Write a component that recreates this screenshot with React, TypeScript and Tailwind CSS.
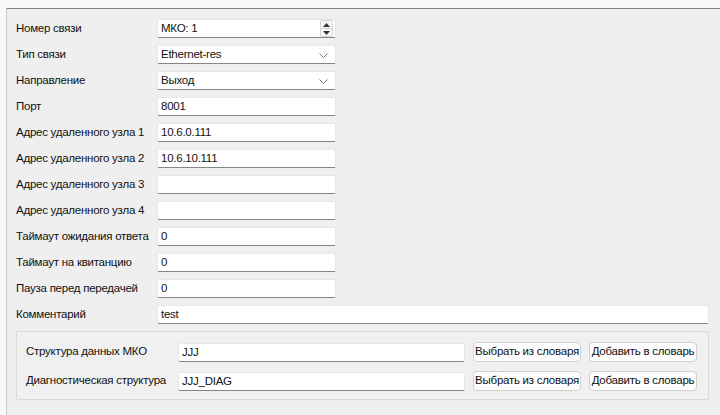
import React from "react";

const font = { fontFamily: '"Liberation Sans", Arial, sans-serif' };

const Chevron = () => (
  <svg width="9" height="5" viewBox="0 0 9 5" className="absolute right-[7px] top-[7px]">
    <path d="M0.5 0.5 L4.5 4.5 L8.5 0.5" fill="none" stroke="#7a7a7a" strokeWidth="1" />
  </svg>
);

const Field = ({ value, combo, spin, wide }: { value?: string; combo?: boolean; spin?: boolean; wide?: boolean }) => (
  <div
    className={`relative h-[19px] bg-white border border-[#e6e6e6] border-b-[#858585] rounded-[2px] pl-[3px] text-[11.5px] tracking-[-0.25px] leading-[17px] text-[#111] whitespace-nowrap ${
      wide ? "flex-1" : "w-[179px]"
    }`}
  >
    {value}
    {combo && <Chevron />}
    {spin && (
      <div className="absolute right-[2px] top-[0px] w-[13px] h-[17px] border border-[#d6d6d6] rounded-[2px] bg-[#f7f7f7] flex flex-col">
        <div className="flex-1 flex items-center justify-center border-b border-[#d6d6d6]">
          <svg width="7" height="4" viewBox="0 0 7 4">
            <path d="M0 4 L3.5 0 L7 4 Z" fill="#333" />
          </svg>
        </div>
        <div className="flex-1 flex items-center justify-center">
          <svg width="7" height="4" viewBox="0 0 7 4">
            <path d="M0 0 L3.5 4 L7 0 Z" fill="#333" />
          </svg>
        </div>
      </div>
    )}
  </div>
);

const rows: { label: string; value?: string; combo?: boolean; spin?: boolean }[] = [
  { label: "Номер связи", value: "МКО: 1", spin: true },
  { label: "Тип связи", value: "Ethernet-res", combo: true },
  { label: "Направление", value: "Выход", combo: true },
  { label: "Порт", value: "8001" },
  { label: "Адрес удаленного узла 1", value: "10.6.0.111" },
  { label: "Адрес удаленного узла 2", value: "10.6.10.111" },
  { label: "Адрес удаленного узла 3" },
  { label: "Адрес удаленного узла 4" },
  { label: "Таймаут ожидания ответа", value: "0" },
  { label: "Таймаут на квитанцию", value: "0" },
  { label: "Пауза перед передачей", value: "0" },
];

const Button = ({ children }: { children: React.ReactNode }) => (
  <div className="w-[108px] h-[20px] shrink-0 bg-[#fdfdfd] border border-[#d0d0d0] rounded-[4px] flex items-center justify-center text-[11.5px] tracking-[-0.25px] text-[#111] whitespace-nowrap">
    {children}
  </div>
);

export default function App() {
  return (
    <div className="w-[720px] h-[415px] bg-[#f9f9f9] overflow-hidden" style={font}>
      <div className="mt-[8px] ml-[6px] h-[407px] bg-[#efefef] border-t border-t-[#7e7e7e] border-l border-l-[#c8c8c8] pt-[10px] pl-[9px] pr-[11px] flex flex-col gap-[7px] text-[11.5px] tracking-[-0.25px] text-[#111]">
        {rows.map((r) => (
          <div key={r.label} className="flex items-center h-[19px]">
            <div className="w-[141px] shrink-0 whitespace-nowrap">{r.label}</div>
            <Field value={r.value} combo={r.combo} spin={r.spin} />
          </div>
        ))}
        <div className="flex items-center h-[19px]">
          <div className="w-[141px] shrink-0">Комментарий</div>
          <Field value="test" wide />
        </div>
        <div className="border border-[#d9d9d9] rounded-[2px] bg-[#f0f0f0] pt-[10px] pb-[8px] pl-[9px] pr-[11px] flex flex-col gap-[9px]">
          {[
            ["Структура данных МКО", "JJJ"],
            ["Диагностическая структура", "JJJ_DIAG"],
          ].map(([label, value]) => (
            <div key={label} className="flex items-center h-[20px]">
              <div className="w-[152px] shrink-0 whitespace-nowrap">{label}</div>
              <Field value={value} wide />
              <div className="w-[8px] shrink-0" />
              <Button>Выбрать из словаря</Button>
              <div className="w-[8px] shrink-0" />
              <Button>Добавить в словарь</Button>
            </div>
          ))}
        </div>
      </div>
    </div>
  );
}
